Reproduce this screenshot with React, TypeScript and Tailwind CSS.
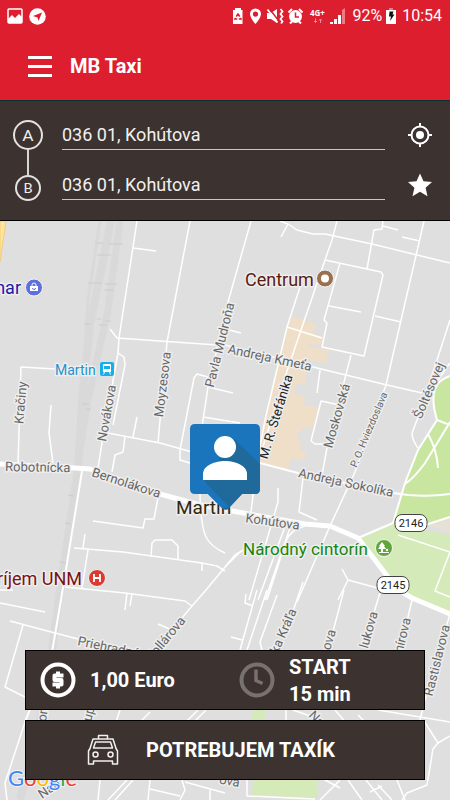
import React from "react";

type LabelProps = {
  x: number;
  y: number;
  angle?: number;
  size?: number;
  color?: string;
  anchor?: "start" | "middle" | "end";
  children: React.ReactNode;
};

function Label({ x, y, angle = 0, size = 13, color = "#666666", anchor = "middle", children }: LabelProps) {
  return (
    <text
      transform={`translate(${x} ${y}) rotate(${angle})`}
      textAnchor={anchor}
      fontSize={size}
      fill={color}
      stroke="#eeeeee"
      strokeWidth={3}
      strokeLinejoin="round"
      paintOrder="stroke"
    >
      {children}
    </text>
  );
}

const MINOR_ROADS = [
  "M137 221L119 338L118 353L102 443L98 468",
  "M118 353L124 357L125 365L113 425",
  "M190 221L167 342L158 443",
  "M251 221L228 302L208 387L200 440L200 495Q201 527 206 537T225 553",
  "M208 377L197 374L194 378L180 450V460L190 463",
  "M110 329L117 338L217 345",
  "M225 329L241 333",
  "M203 417L240 423M208 387L233 393",
  "M133 248L156 251",
  "M55 369L21 367L18 464",
  "M51 405L49 433L53 463",
  "M108 433L160 443L192 452",
  "M137 417L133 437",
  "M125 437L123 452L115 455L112 472",
  "M93 521L143 528L145 519L154 519L158 498",
  "M74 548L123 552L202 563L217 566L225 571",
  "M85 534L83 548M88 550L82 588M202 563V571",
  "M151 557L152 543L155 540H172L178 546L178 559",
  "M65 587L125 593L185 601L192 606",
  "M127 593L125 610M132 594L130 606",
  "M240 552L225 567L206 590L192 606L150 656",
  "M10 621L55 633L120 650",
  "M23 625L5 687L25 697",
  "M0 603L45 612M0 590L13 590",
  "M158 624L172 630",
  "M337 221L332 240L325 260L287 371L258 462",
  "M300 287L287 327L265 420L257 463L251 512",
  "M280 221L288 224L297 230L313 234L325 234L372 244L450 263",
  "M288 224L281 237",
  "M325 260L381 272L383 275L364 356L322 347L327 323L324 320L340 263",
  "M383 221L382 229L374 230L367 269M383 226L398 230M402 237L420 241",
  "M424 221L386 385L355 472L330 526L297 602",
  "M375 316L401 322M329 306L361 312",
  "M287 327L322 338",
  "M225 345L317 368L387 385L422 393",
  "M351 355L327 448L322 475",
  "M320 370L317 393",
  "M340 405L321 401L311 441L315 444L328 444",
  "M450 320L437 360L417 420L412 433Q412 440 418 448",
  "M450 363L438 380",
  "M303 478L299 512L317 520",
  "M278 488L278 502L249 600",
  "M286 524L258 600M291 525L265 600M305 526Q290 530 286 541L267 600",
  "M225 567L235 555L245 549",
  "M342 569L348 580L385 590M348 580L338 600",
  "M257 590L240 650M267 590L247 650M277 595L260 642L262 650",
  "M246 594L245 603L253 606M231 637L242 640",
  "M303 582L290 620M344 590L332 635M380 593L370 625M412 600L405 630M450 614L425 700L420 720",
  "M25 722L5 783L7 800",
  "M378 710L450 722M424 721L438 743L433 749L427 785L407 793L402 800",
  "M450 736L438 743",
  "M120 710L116 722M150 712L140 722M198 710L186 722M206 710L194 722M286 710L286 722",
  "M293 710L316 718L340 735M335 710L348 725M358 715L365 722",
  "M100 780L98 800M127 780L108 800M133 780L115 800M150 780L148 800M182 780L185 790L180 800M150 789L180 796M185 782L225 793M210 790L210 800",
  "M340 780L320 800M325 780L340 788M348 780L362 800M366 780L382 800M378 785L392 800M370 792L382 786M397 780L405 800M247 780L247 796L315 799",
];

function MapView() {
  return (
    <svg
      className="absolute inset-0 h-full w-full"
      viewBox="0 221 450 579"
      preserveAspectRatio="xMidYMin slice"
      role="img"
      aria-label="Mapa mesta Martin"
      fontFamily='Roboto, "Noto Sans", sans-serif'
    >
      <rect x="0" y="221" width="450" height="579" fill="#dfdfdf" />
      <path d="M0 221H6L0 262Z" fill="#ffe49a" stroke="#f2cd7c" />

      <g fill="none" stroke="#d9d9d9">
        <path d="M111 221L90 325L82 400L78 470L60 590L52 650L40 722L20 800" strokeWidth="8" />
        <path d="M120 221L108 310L88 400L80 450" strokeWidth="7" />
        <path d="M100 221L88 300L83 380" strokeWidth="3" />
      </g>
      <path
        d="M95 243h8m6 1h14M97 255h14M88 283h14m3 1h12M104 290h10M97 319h4m4 2h6M84 324h7m8 1h8M82 404h7m-4 5h6M72 468l7 1M68 495l6 1M65 523l6 1M60 562l6 1"
        stroke="#cccccc"
        fill="none"
      />

      <path
        d="M291 316L316 324L313 333L322 337L321 345L309 344V347L329 350L325 363L308 360L305 385L296 383L294 393L305 397L304 405L319 408L312 429L303 427L301 432H297V439L301 441L300 450L306 452L304 460L291 458L288 470L260 463L265 420L280 353Z"
        fill="#f0dfc8"
      />
      <path d="M450 376Q438 380 435 389Q431 400 437 420L418 450L405 483L393 523L425 525L450 517Z" fill="#c8e6a0" />
      <path d="M358 538L393 524L450 535V613L412 597L388 577Z" fill="#d5eab9" />
      <path d="M425 525L450 517V532Z" fill="#e6e1d6" />
      <path d="M253 710H267L263 722H250Z" fill="#d5eab9" />
      <path d="M253 778H318V798L252 795Z" fill="#d5eab9" />

      <g fill="none" stroke="#ffffff" strokeWidth="1.5" strokeLinejoin="round">
        {MINOR_ROADS.map((d) => (
          <path key={d} d={d} />
        ))}
        <path d="M450 376Q438 380 435 389Q431 400 437 420L418 450L405 483L393 523L358 538" strokeWidth="2" />
        <path d="M437 420L450 425M428 434Q437 450 438 468M450 422L425 463Q415 477 405 484" strokeWidth="2" />
        <path d="M260 463L298 473L393 493L408 495Q430 497 450 494M425 525L450 517" strokeWidth="2" />
        <path d="M398 535L450 552L435 591L450 597" />
        <path d="M82 471L61 600L52 652L25 722" strokeWidth="2" />
        <path d="M0 464L60 467L90 469L160 494L200 505L232 511L305 524L330 526L358 538L388 577Q397 590 412 598L450 614" strokeWidth="5" />
      </g>

      <Label x={5} y={471} angle={1} anchor="start">Robotnícka</Label>
      <Label x={125} y={487} angle={18}>Bernolákova</Label>
      <Label x={272} y={526} angle={8}>Kohútova</Label>
      <Label x={269} y={362} angle={12}>Andreja Kmeťa</Label>
      <Label x={345} y={487} angle={12}>Andreja Sokolíka</Label>
      <Label x={25} y={403} angle={-85}>Kračiny</Label>
      <Label x={111} y={414} angle={-80}>Novákova</Label>
      <Label x={167} y={385} angle={-83}>Moyzesova</Label>
      <Label x={224} y={346} angle={-76}>Pavla Mudroňa</Label>
      <Label x={280} y={418} angle={-73} color="#222222">M. R. Štefánika</Label>
      <Label x={341} y={417} angle={-74}>Moskovská</Label>
      <Label x={372} y={431} angle={-67} size={10}>P. O. Hviezdoslava</Label>
      <Label x={433} y={392} angle={-67}>Šoltésovej</Label>
      <Label x={186} y={621} angle={-50} anchor="end">Kollárova</Label>
      <Label x={77} y={645} angle={12} anchor="start">Priehradná</Label>
      <Label x={297} y={611} angle={-66} anchor="end">ka Kráľa</Label>
      <Label x={336} y={631} angle={-73} anchor="end">ova</Label>
      <Label x={378} y={613} angle={-74} anchor="end">lukova</Label>
      <Label x={411} y={619} angle={-76} anchor="end">mírova</Label>
      <Label x={450} y={626} angle={-76} anchor="end">Rastislavova</Label>
      <Label x={46} y={722} angle={-82} anchor="start">om</Label>
      <Label x={91} y={722} angle={-75} anchor="start">up</Label>
      <Label x={308} y={716} angle={45} anchor="start">Na</Label>
      <Label x={42} y={799} angle={-35} anchor="start">Nad</Label>
      <Label x={239} y={787} angle={10} anchor="end">ova</Label>

      <Label x={245} y={286} size={18} color="#5c1a10" anchor="start">Centrum</Label>
      <Label x={21} y={294} size={18} color="#1a1aa8" anchor="end">nar</Label>
      <Label x={82} y={585} size={18} color="#7a1212" anchor="end">ríjem UNM</Label>
      <Label x={55} y={375} size={14} color="#1f93cf" anchor="start">Martin</Label>
      <Label x={176} y={514} size={19} color="#33270f" anchor="start">Martin</Label>
      <Label x={243} y={555} size={17} color="#16850c" anchor="start">Národný cintorín</Label>

      <g stroke="#f4f4f4" strokeWidth="1">
        <circle cx="34" cy="287.5" r="8.5" fill="#5f70dc" />
        <circle cx="325" cy="278.5" r="8.5" fill="#9a7050" />
        <circle cx="97" cy="578" r="8.5" fill="#db3a30" />
        <circle cx="384" cy="548" r="8.5" fill="#5fa53a" />
      </g>
      <path d="M30 286h8v5h-8z" fill="#fff" />
      <path d="M32 286v-1a2 2 0 0 1 4 0v1" fill="none" stroke="#fff" />
      <path d="M32.500 288a1.500 1.500 0 0 0 3 0" fill="none" stroke="#5f70dc" />
      <circle cx="325" cy="278.500" r="4" fill="#fff" />
      <path d="M94 574v8M100 574v8M94 578h6" stroke="#fff" strokeWidth="1.800" />
      <path d="M382 542l3 4h-1l2 3h-3v3h6v1h-10v-1h2v-3h-3l2-3h-1z" fill="#fff" />
      <circle cx="387" cy="550" r="1.200" fill="#fff" />
      <rect x="100" y="362" width="14" height="14" rx="2" fill="#18aeea" />
      <path d="M104 364h6a1 1 0 0 1 1 1v7h-8v-7a1 1 0 0 1 1-1z" fill="#fff" />
      <path d="M104 366h6v3h-6z" fill="#18aeea" />
      <path d="M104.500 372l-1 2.500M109.500 372l1 2.500" stroke="#fff" />

      {[
        { n: "2146", x: 411, y: 523 },
        { n: "2145", x: 393, y: 585 },
      ].map((s) => (
        <g key={s.n}>
          <rect x={s.x - 16} y={s.y - 8.5} width="32" height="17" rx="7" fill="#fff" stroke="#444" />
          <text x={s.x} y={s.y + 4} fontSize="11" textAnchor="middle" fill="#222">
            {s.n}
          </text>
        </g>
      ))}

      <path d="M195 424H255Q260 424 260 429V489Q260 494 255 494H242L228 509Q225 511 222 508L208 494H195Q190 494 190 489V429Q190 424 195 424Z" fill="#1b75bc" />
      <path d="M234 439L260 464V489Q260 494 255 494H242L228 509Q226 510 224 509L204 480Z" fill="#20699b" />
      <path d="M203 480L229 507L222 508L208 494L190 490V480Z" fill="#1b75bc" />
      <circle cx="225" cy="447" r="11" fill="#fff" />
      <path d="M203 480V474C203 466 214 461 225 461S247 466 247 474V480Z" fill="#fff" />

      <text x="8" y="786" fontSize="22" fontFamily="Lato, sans-serif" stroke="#f4f4f4" strokeWidth="2" paintOrder="stroke">
        <tspan fill="#4285f4">G</tspan>
        <tspan fill="#ea4335">o</tspan>
        <tspan fill="#fbbc05">o</tspan>
        <tspan fill="#4285f4">g</tspan>
        <tspan fill="#34a853">l</tspan>
        <tspan fill="#ea4335">e</tspan>
      </text>
    </svg>
  );
}

function StatusBar() {
  return (
    <div className="flex h-8 items-center justify-between pr-2 pl-[7px] text-white">
      <div className="flex items-center gap-[6px]">
        <svg width="16" height="16" viewBox="0 0 16 16" aria-hidden="true">
          <rect x="1" y="1" width="14" height="14" rx="1" fill="none" stroke="#fff" strokeWidth="1.5" />
          <path d="M1 11l4-4 3 3 4-4 3 3v6H1z" fill="#fff" />
        </svg>
        <svg width="17" height="17" viewBox="0 0 17 17" aria-hidden="true">
          <circle cx="8.500" cy="8.500" r="8.300" fill="#fff" />
          <path d="M13 4.500L9.500 13 8.500 9.500 4 8z" fill="#dd1e2f" />
        </svg>
      </div>
      <div className="flex items-center">
        <svg width="114" height="18" viewBox="232 6 114 18" aria-hidden="true">
          <path d="M235 7h6v2h1.500v14h-9.500V9h2z" fill="#fff" />
          <path d="M238 12.500l3 5.500h-6z" fill="none" stroke="#dd1e2f" strokeWidth="1.500" strokeDasharray="3.500 1.500" />
          <path d="M255.500 7.500a5.500 5.500 0 0 0-5.500 5.500c0 4 5.500 10 5.500 10s5.500-6 5.500-10a5.500 5.500 0 0 0-5.500-5.500zm0 3a2.600 2.600 0 1 1 0 5.200 2.600 2.600 0 0 1 0-5.200z" fill="#fff" />
          <path d="M267 12h4l6-4v14l-6-4h-4z" fill="#fff" />
          <path d="M269.500 8l11 14" stroke="#dd1e2f" strokeWidth="1.500" />
          <path d="M267.500 8.500l10 13M280.500 8l2 2.500-2 2.500 2 2.500-2 2.500 2 2.500-1.500 2" fill="none" stroke="#fff" strokeWidth="1.800" />
          <circle cx="295.500" cy="15.500" r="6.500" fill="#fff" />
          <path d="M288.500 11.500l3.500-3.500M302.500 11.500l-3.500-3.500M290 22.500l2-2M301 22.500l-2-2" stroke="#fff" strokeWidth="2" />
          <path d="M295.500 11.500v4.500h3.500" fill="none" stroke="#dd1e2f" strokeWidth="1.500" />
          <text x="310" y="15" fontSize="8" fontWeight="700" fill="#fff" fontFamily='"Noto Sans", sans-serif'>4G+</text>
          <path d="M315.500 17.500v4m-1.500-1.500l1.500 1.500 1.500-1.500M320.500 22v-4m-1.500 1.500l1.500-1.500 1.500 1.500" fill="none" stroke="#f08e96" />
          <path d="M330 23v-2h3v2zM334 23v-5h3v5zM338 23v-9h3v9z" fill="#fff" />
          <path d="M342 23V9l3-2v16z" fill="#ee7b84" />
        </svg>
        <span className="ml-[6px] text-base leading-5">92%</span>
        <svg className="ml-1" width="10" height="16" viewBox="0 0 10 16" aria-hidden="true">
          <path d="M0 2h10v14H0z" fill="#fff" />
          <path d="M3 0h4v2H3z" fill="#ee7b84" />
          <path d="M3.500 3.500h4l-1 3h2l-4.500 6.500 1-4.500h-2z" fill="#111" />
        </svg>
        <span className="ml-[6px] text-base leading-5">10:54</span>
      </div>
    </div>
  );
}

function AddressRow({ id, label, children, action }: { id: string; label: string; children: React.ReactNode; action: string }) {
  return (
    <div className="flex h-[30px] items-center">
      <input
        id={id}
        type="text"
        aria-label={label}
        defaultValue="036 01, Kohútova"
        className="h-[30px] min-w-0 flex-1 border-b border-[#c9c6cf] bg-transparent text-lg leading-6 text-[#f2f0ef] outline-none"
      />
      <button type="button" aria-label={action} className="ml-[23px] flex h-6 w-6 items-center justify-center">
        {children}
      </button>
    </div>
  );
}

export default function App() {
  return (
    <div className="flex min-h-screen flex-col bg-[#dfdfdf] font-[Roboto,'Noto_Sans',sans-serif]">
      <header className="h-[100px] bg-[#dd1e2f]">
        <StatusBar />
        <div className="flex h-[68px] items-center gap-[18px] pl-7 text-white">
          <button type="button" aria-label="Menu" className="flex w-6 flex-col gap-[6px]">
            <span className="h-[3px] w-full bg-white" />
            <span className="h-[3px] w-full bg-white" />
            <span className="h-[3px] w-full bg-white" />
          </button>
          <h1 className="text-xl font-bold">MB Taxi</h1>
        </div>
      </header>

      <section className="flex h-[121px] border-t border-b border-t-[#0b2f2c] border-b-black bg-[#3c3330] pt-[19px] pr-[18px] pl-[13px]">
        <div className="flex w-[30px] flex-col items-center font-[Lato,sans-serif] text-[#f2f0ef]">
          <label
            htmlFor="from"
            className="flex h-[30px] w-[30px] items-center justify-center rounded-full border-2 border-[#e4e1e0] text-base leading-5"
          >
            A
          </label>
          <span className="h-[25px] w-[2px] bg-[#d8d5d4]" />
          <label
            htmlFor="to"
            className="flex h-[26px] w-[26px] items-center justify-center rounded-full border-2 border-[#e4e1e0] text-sm leading-5"
          >
            B
          </label>
        </div>
        <div className="ml-[19px] flex min-w-0 flex-1 flex-col gap-5">
          <AddressRow id="from" label="Odkiaľ" action="Moja poloha">
            <svg width="24" height="24" viewBox="0 0 24 24" fill="none" stroke="#fff" strokeWidth="2" aria-hidden="true">
              <circle cx="12" cy="12" r="8.500" />
              <circle cx="12" cy="12" r="4" fill="#fff" stroke="none" />
              <path d="M12 0v4M12 20v4M0 12h4M20 12h4" />
            </svg>
          </AddressRow>
          <AddressRow id="to" label="Kam" action="Obľúbené">
            <svg width="24" height="24" viewBox="0 0 24 24" fill="#fff" aria-hidden="true">
              <path d="M12 .5l3.500 7.800 8.500.8-6.400 5.700 1.900 8.400L12 18.800l-7.500 4.400 1.900-8.400L0 9.100l8.500-.8z" />
            </svg>
          </AddressRow>
        </div>
      </section>

      <main className="relative flex flex-1 flex-col justify-end overflow-hidden px-[25px] pt-[300px] pb-5">
        <MapView />
        <div className="relative flex flex-col gap-[10px] font-bold text-white">
          <div className="grid h-[60px] grid-cols-2 border border-black bg-[#3c3330] text-xl">
            <div className="flex items-center gap-[14px] pl-[14px]">
              <svg width="36" height="36" viewBox="0 0 36 36" aria-hidden="true">
                <circle cx="18" cy="18" r="15.500" fill="none" stroke="#fff" strokeWidth="4" />
                <path d="M23.500 13.500H14.500V18H21.500V22.500H12.500M18 9.500V13M18 23V26.500" fill="none" stroke="#fff" strokeWidth="4" strokeLinejoin="round" />
              </svg>
              <span>1,00 Euro</span>
            </div>
            <div className="flex items-center gap-[14px] pl-[14px]">
              <svg width="36" height="36" viewBox="0 0 36 36" fill="none" stroke="#777170" aria-hidden="true">
                <circle cx="18" cy="18" r="15.500" strokeWidth="4" />
                <path d="M17 7.500V18.500L23.500 21.500" strokeWidth="3.500" />
              </svg>
              <span className="pt-[2px] leading-[27px]">
                START
                <br />
                15 min
              </span>
            </div>
          </div>
          <button
            type="button"
            className="flex h-[60px] items-center justify-center gap-[27px] border border-black bg-[#3c3330] pr-7 text-xl font-bold"
          >
            <svg width="32" height="32" viewBox="0 0 32 32" fill="none" stroke="#f2f0ef" strokeWidth="1.500" strokeLinejoin="round" aria-hidden="true">
              <path d="M11.500 5V1.500h9V5M6 5h20l3 9.500 1.500 2.500v13h-5v-3h-19v3h-5V17L3 14.500z" />
              <path d="M8.500 8h15l2 6h-19z" />
              <circle cx="8.500" cy="20.500" r="2.500" />
              <circle cx="23.500" cy="20.500" r="2.500" />
            </svg>
            POTREBUJEM TAXÍK
          </button>
        </div>
      </main>
    </div>
  );
}
